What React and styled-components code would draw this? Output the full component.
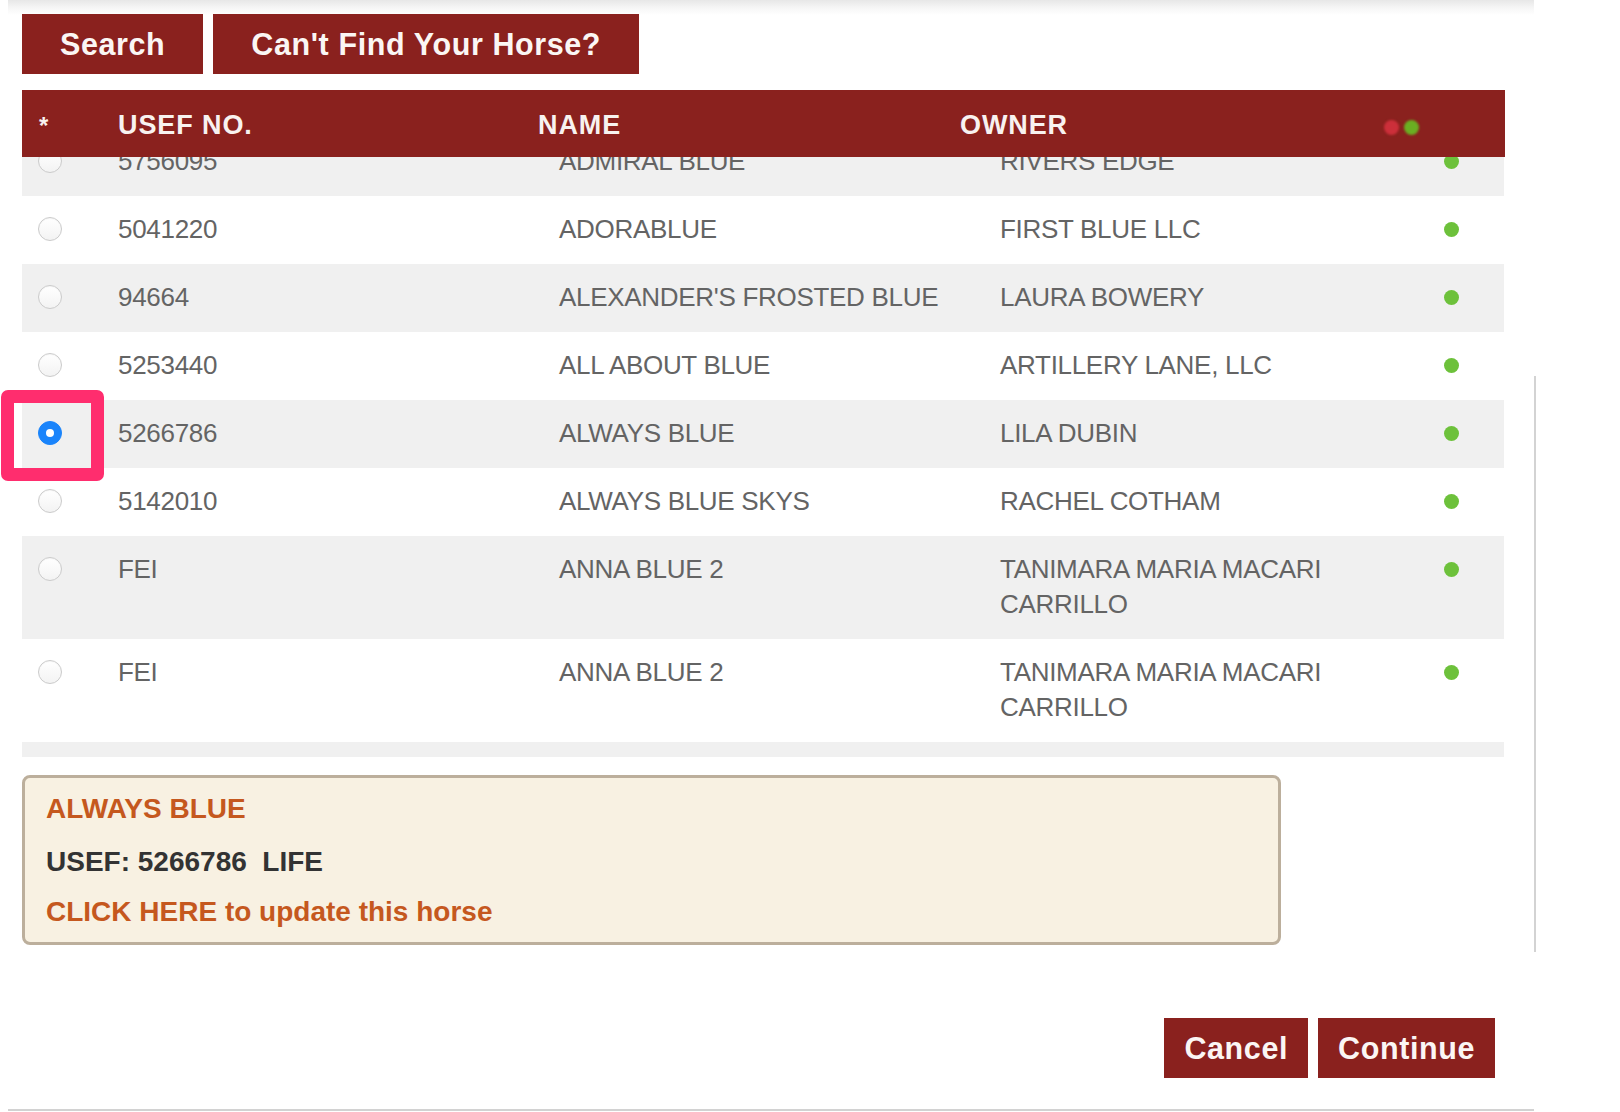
import React, { useLayoutEffect, useRef } from "react";
import styled, { createGlobalStyle } from "styled-components";

const RED = "#8a211e";

const GlobalStyle = createGlobalStyle`
  html, body { margin: 0; padding: 0; background: #ffffff; }
  body { font-family: "Liberation Sans", Arial, Helvetica, sans-serif; }
  * { box-sizing: border-box; }
`;

const Page = styled.div`
  position: relative;
  display: flex;
  align-items: flex-start;
  padding-left: 8px;
  width: 1620px;
  height: 1112px;
  overflow: hidden;
`;

const Content = styled.div`
  width: 1526px;
  padding: 14px 0 31px 14px;
  border-bottom: 2px solid #d2d2d2;
  background: linear-gradient(to bottom, #e7e7e7 0px, #f6f6f6 8px, #ffffff 15px) no-repeat;
`;

const Rail = styled.div`
  width: 2px;
  height: 576px;
  margin-top: 376px;
  background: #d3d3d3;
`;

const Toolbar = styled.div`
  display: flex;
  gap: 10px;
  justify-content: ${(p) => (p.$end ? "flex-end" : "flex-start")};
  padding-right: ${(p) => (p.$end ? "39px" : "0")};
  margin-top: ${(p) => p.$top || 0}px;
`;

const Button = styled.button`
  height: 60px;
  padding: 0 ${(p) => p.$pad}px;
  border: none;
  border-radius: 0;
  background: ${RED};
  color: #fbf6f4;
  font-family: "Liberation Sans", Arial, Helvetica, sans-serif;
  font-weight: 700;
  font-size: 30.5px;
  letter-spacing: 0.6px;
  cursor: pointer;
`;

const HeaderBar = styled.div`
  display: grid;
  grid-template-columns: 96px 420px 422px 424px 1fr;
  align-items: center;
  width: 1483px;
  height: 67px;
  padding-top: 4px;
  margin-top: 16px;
  background: ${RED};
  color: #f8f2f0;
  font-weight: 700;
  font-size: 27px;
  letter-spacing: 0.9px;
`;

const Star = styled.span`
  padding-left: 17px;
  font-size: 24px;
`;

const DotGroup = styled.div`
  display: flex;
  gap: 5px;
  margin-top: 3px;
`;

const Dot = styled.span`
  display: block;
  width: 15px;
  height: 15px;
  border-radius: 50%;
  background: ${(p) => p.$color};
  filter: blur(${(p) => p.$blur || 0.6}px);
`;

const Viewport = styled.div`
  width: 1482px;
  height: 600px;
  overflow: hidden;
`;

const Row = styled.div`
  display: grid;
  grid-template-columns: 96px 441px 441px 426px 1fr;
  align-items: start;
  padding: 16px 0 17px;
  background: ${(p) => (p.$alt ? "#f0f0f0" : "#ffffff")};
  color: #646464;
  font-size: 26px;
  line-height: 35px;
  letter-spacing: -0.3px;
`;

const RadioCell = styled.div`
  padding-left: 16px;
  padding-top: 5px;
`;

const Radio = styled.span`
  display: flex;
  align-items: center;
  justify-content: center;
  width: 24px;
  height: 24px;
  border-radius: 50%;
  border: 1px solid ${(p) => (p.$checked ? "#1a84fb" : "#cbcbcb")};
  background: ${(p) =>
    p.$checked ? "#1a84fb" : "linear-gradient(to bottom, #ffffff, #f3f3f3)"};
  box-shadow: ${(p) => (p.$checked ? "none" : "inset 0 1px 1px rgba(0,0,0,0.04)")};

  &::after {
    content: "";
    display: ${(p) => (p.$checked ? "block" : "none")};
    width: 8px;
    height: 8px;
    border-radius: 50%;
    background: #ffffff;
  }
`;

const Cell = styled.div``;

const DotCell = styled.div`
  padding-left: 18px;
  padding-top: 10px;
`;

const InfoPanel = styled.div`
  width: 1259px;
  margin-top: 18px;
  padding: 12px 21px;
  border: 3px solid #bcaf9c;
  border-radius: 8px;
  background: #f8f1e2;
  font-weight: 700;
  font-size: 28px;
  line-height: 37px;
`;

const InfoLine = styled.div`
  color: ${(p) => p.$color};
  margin-bottom: ${(p) => p.$gap || 0}px;
  white-space: pre;
`;

const Highlight = styled.div`
  position: absolute;
  left: 1px;
  top: 390px;
  width: 103px;
  height: 91px;
  border: 13px solid #ff2d6e;
  border-radius: 7px;
  pointer-events: none;
`;

const horses = [
  { id: "5756095", name: "ADMIRAL BLUE", owner: "RIVERS EDGE" },
  { id: "5041220", name: "ADORABLUE", owner: "FIRST BLUE LLC" },
  { id: "94664", name: "ALEXANDER'S FROSTED BLUE", owner: "LAURA BOWERY" },
  { id: "5253440", name: "ALL ABOUT BLUE", owner: "ARTILLERY LANE, LLC" },
  { id: "5266786", name: "ALWAYS BLUE", owner: "LILA DUBIN", checked: true },
  { id: "5142010", name: "ALWAYS BLUE SKYS", owner: "RACHEL COTHAM" },
  { id: "FEI", name: "ANNA BLUE 2", owner: "TANIMARA MARIA MACARI CARRILLO" },
  { id: "FEI", name: "ANNA BLUE 2", owner: "TANIMARA MARIA MACARI CARRILLO" },
  { id: "5390457", name: "ANOTHER BLUE", owner: "BLUE RIDGE FARM" },
];

export default function App() {
  const viewRef = useRef(null);

  useLayoutEffect(() => {
    if (viewRef.current) viewRef.current.scrollTop = 29;
  }, []);

  return (
    <>
      <GlobalStyle />
      <Page>
        <Content>
          <Toolbar>
            <Button $pad={38}>Search</Button>
            <Button $pad={38}>Can't Find Your Horse?</Button>
          </Toolbar>

          <HeaderBar>
            <Star>*</Star>
            <span>USEF NO.</span>
            <span>NAME</span>
            <span>OWNER</span>
            <DotGroup>
              <Dot $color="#cc2f3a" $blur={1.2} />
              <Dot $color="#6aae22" $blur={1.2} />
            </DotGroup>
          </HeaderBar>

          <Viewport ref={viewRef}>
            {horses.map((h, i) => (
              <Row key={i} $alt={i % 2 === 0}>
                <RadioCell>
                  <Radio $checked={!!h.checked} />
                </RadioCell>
                <Cell>{h.id}</Cell>
                <Cell>{h.name}</Cell>
                <Cell>{h.owner}</Cell>
                <DotCell>
                  <Dot $color="#6dc13b" />
                </DotCell>
              </Row>
            ))}
          </Viewport>

          <InfoPanel>
            <InfoLine $color="#c5581e" $gap={16}>ALWAYS BLUE</InfoLine>
            <InfoLine $color="#333333" $gap={13}>{"USEF: 5266786  LIFE"}</InfoLine>
            <InfoLine $color="#c5581e">CLICK HERE to update this horse</InfoLine>
          </InfoPanel>

          <Toolbar $end $top={73}>
            <Button $pad={20}>Cancel</Button>
            <Button $pad={20}>Continue</Button>
          </Toolbar>
        </Content>
        <Rail />
        <Highlight />
      </Page>
    </>
  );
}
